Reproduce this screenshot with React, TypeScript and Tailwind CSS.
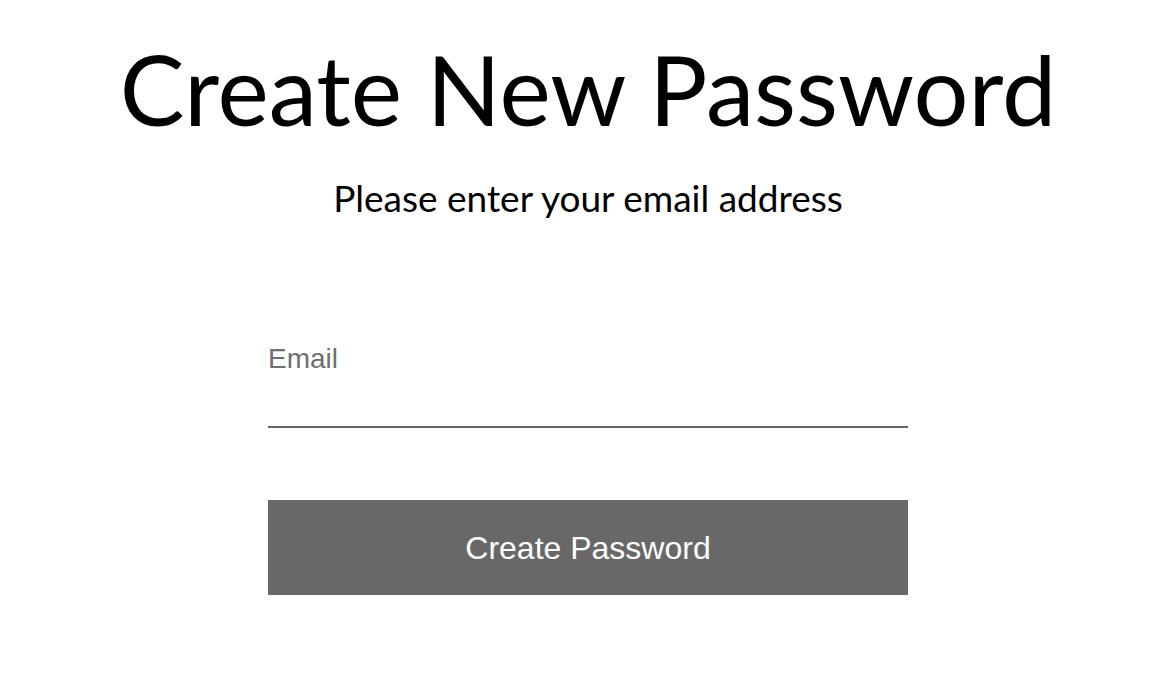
export default function App() {
  return (
    <div className="w-[1168px] h-[682px] bg-white flex flex-col items-center pl-[8px]">
      <h1 className="mt-[34px] text-[97px] leading-[110px] text-black font-['Lato',sans-serif]">
        Create New Password
      </h1>
      <p className="mt-[34px] text-[37px] leading-[40px] text-black font-['Lato',sans-serif]">
        Please enter your email address
      </p>
      <div className="mt-[125px] w-[640px] flex flex-col">
        <label className="text-[28px] leading-[32px] text-[#6f6f6f] font-['Liberation_Sans',Arial,sans-serif]">
          Email
        </label>
        <div className="mt-[51px] h-[2px] bg-[#666666]" />
        <button className="mt-[72px] h-[95px] bg-[#686868] text-white text-[32px] font-['Liberation_Sans',Arial,sans-serif]">
          Create Password
        </button>
      </div>
    </div>
  );
}
